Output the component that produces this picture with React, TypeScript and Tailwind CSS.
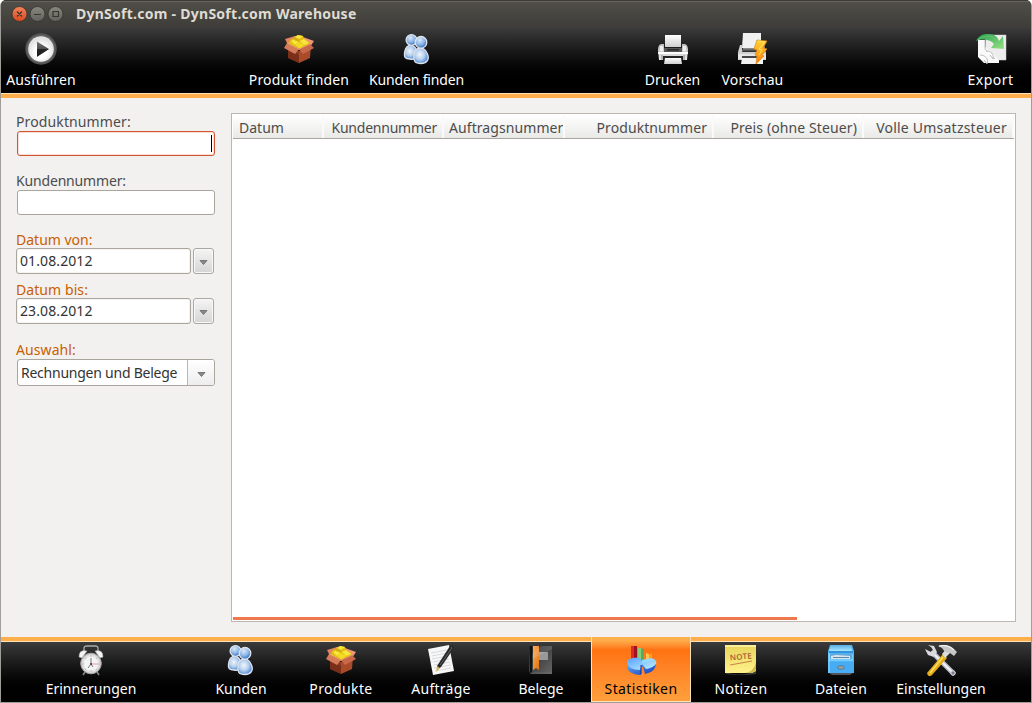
import type { ReactNode } from "react";

function Icon({ children }: { children: ReactNode }) {
  return (
    <svg width="32" height="32" viewBox="0 0 32 32" className="block shrink-0">
      {children}
    </svg>
  );
}

function Gradient({ id, from, to, x2 = 0, y2 = 1 }: { id: string; from: string; to: string; x2?: number; y2?: number }) {
  return (
    <linearGradient id={id} x1="0" y1="0" x2={x2} y2={y2}>
      <stop offset="0" stopColor={from} />
      <stop offset="1" stopColor={to} />
    </linearGradient>
  );
}

const RunIcon = () => (
  <Icon>
    <defs>
      <radialGradient id="run-disc" cy=".6">
        <stop offset=".5" stopColor="#fff" />
        <stop offset="1" stopColor="#e2e2e2" />
      </radialGradient>
      <Gradient id="run-arrow" from="#777" to="#222" />
    </defs>
    <circle cx="16" cy="16" r="15.7" fill="#555" />
    <circle cx="16" cy="16" r="14" fill="#656565" />
    <circle cx="16" cy="16" r="12.8" fill="url(#run-disc)" />
    <path d="M12 8.5 24 16 12 23.8Z" fill="url(#run-arrow)" />
    <path d="M12 16H24L12 23.8Z" fill="#171717" opacity=".7" />
  </Icon>
);

const BoxIcon = () => (
  <Icon>
    <path d="M5 13 16 18V30L5 25Z" fill="#8d3a20" />
    <path d="M16 18 28 12 27 25 16 30Z" fill="#a94a2b" />
    <path d="M5 17 16 22V30L5 25Z" fill="#6d2814" opacity=".6" />
    <path d="M2 6 12 3 14 6 5 12Z" fill="#e08662" />
    <path d="M20 4 31 8 27 14 18 8Z" fill="#ef9675" />
    <path d="M5 11 8 6 12 5 15 2 20 3 21 6 26 9 26 13 16 17 5 14Z" fill="#e3bf10" />
    <path d="M11 4 15 2 20 3 16 6Z M8 8 12 6 16 9 12 12Z M17 8 21 6 26 10 21 12Z" fill="#f8e53e" />
    <path d="M11 4 16 6V9L11 7Z M12 12 16 9 19 12 16 16Z" fill="#d4b011" />
    <path d="M16 9 21 12 17 16 12 12Z" fill="#f4da22" />
    <path d="M4 10 16 16 12 21 1 15Z" fill="#d57b59" />
    <path d="M16 16 27 11 31 15 20 21Z" fill="#c9694b" />
    <path d="M4 10 16 16 27 11" fill="none" stroke="#ed9b77" strokeWidth=".8" />
  </Icon>
);

const PeopleIcon = () => (
  <Icon>
    <defs>
      <radialGradient id="person-body" cx=".42" cy=".42" r=".65">
        <stop offset="0" stopColor="#f1f6fc" />
        <stop offset=".5" stopColor="#b6cfee" />
        <stop offset="1" stopColor="#3a7ace" />
      </radialGradient>
      <radialGradient id="person-head" cx=".4" cy=".3" r=".7">
        <stop offset="0" stopColor="#dae9fa" />
        <stop offset=".6" stopColor="#8ab2e5" />
        <stop offset="1" stopColor="#2b6bc3" />
      </radialGradient>
    </defs>
    <g stroke="#dce4ee" strokeWidth="1.300">
      <path d="M7 13C10 11 15 13 16 19 17 25 14 27 9 26 4 26 3 24 3.500 20 4 16 5 14 7 13Z" fill="url(#person-body)" />
      <circle cx="10.500" cy="7" r="5.400" fill="url(#person-head)" />
      <path d="M16 16C20 13 25 16 26.500 21 29 27 25 30.500 20 30.500 14 30.500 12 28 13 23 13 19 14 17 16 16Z" fill="url(#person-body)" />
      <circle cx="20" cy="9.300" r="5.800" fill="url(#person-head)" />
    </g>
  </Icon>
);

const PrintIcon = () => (
  <Icon>
    <defs>
      <Gradient id="printer-body" from="#bcbcbc" to="#e9e9e9" />
      <Gradient id="printer-paper" from="#fff" to="#cfcfcf" />
    </defs>
    <path d="M8 2H24V14H8Z" fill="url(#printer-paper)" />
    <path d="M4 11Q1 12 1 17L2 27H30L31 17Q31 12 28 11H25V16H7V11Z" fill="url(#printer-body)" />
    <path d="M7 15H25V19H7Z" fill="#555" />
    <path d="M10 16H22V17.500H10Z" fill="#292929" />
    <path d="M1 19H31V21H1Z" fill="#fff" />
    <path d="M6 23H26V27H6Z" fill="#252525" />
    <path d="M8 25H24L25 31H7Z" fill="url(#printer-paper)" />
    <path d="M3 13H6V18H3M26 13H29V18H26" fill="#eee" />
    <path d="M5 22V27M27 22V27" stroke="#888" />
  </Icon>
);

const PreviewIcon = () => (
  <Icon>
    <defs>
      <Gradient id="bolt" from="#ffd632" to="#ff7b05" />
      <Gradient id="preview-slot" from="#999" to="#222" />
    </defs>
    <path d="M6 0H24V15H5Z" fill="#f1f1f1" />
    <path d="M3 12H5V17H25L27 12 29 20V27H1V19Z" fill="#cfcfcf" />
    <path d="M6 15H25V19H5Z" fill="url(#preview-slot)" />
    <path d="M1 21H29V26H1Z" fill="#e5e5e5" />
    <path d="M5 23H25V25H5Z" fill="#444" />
    <path d="M5 25H26V31H4Z" fill="#f2f2f2" />
    <path d="M20 7 30 8 26 15 30 16 25 22 27 23 19 31 20 23 18 22 20 17 17 16Z" fill="url(#bolt)" stroke="#d78616" strokeWidth=".7" />
    <path d="M21 8 28 9 22 16 25 17 22 22" fill="none" stroke="#ffe569" />
  </Icon>
);

const ExportIcon = () => (
  <Icon>
    <defs>
      <Gradient id="export-arrow" from="#249c4b" to="#98e386" x2={1} />
    </defs>
    <path d="M11 2H31V27H17L10 20Z" fill="#ededed" stroke="#ccc" strokeWidth=".5" />
    <path d="M3 7H10V14L19 22 24 27V30H9L3 24Z" fill="#fafafa" />
    <path d="M10 7V16L20 26" fill="none" stroke="#aaa" strokeWidth=".7" />
    <path d="M11 18C16 18 19 21 18 26L15 22M5 22C10 22 14 26 12 31L9 27" fill="#fff" stroke="#aaa" strokeWidth=".8" />
    <path d="M1 8C4 2 9 .5 14 1 19 1 23 4 24 8L28 3 29 16 16 15 19 11C16 7 8 5 1 8Z" fill="url(#export-arrow)" />
    <path d="M3 7C9 2 18 1 23 9" fill="none" stroke="#67c779" strokeWidth=".8" />
  </Icon>
);

const ClockIcon = () => (
  <Icon>
    <defs>
      <radialGradient id="clock-face">
        <stop offset=".6" stopColor="#f5f5f5" />
        <stop offset="1" stopColor="#c7c7c7" />
      </radialGradient>
    </defs>
    <path d="M9 8V4Q9 2 12 2H20Q23 2 23 4V8" fill="none" stroke="#aaa" strokeWidth="1.300" />
    <path d="M4 13Q4 5 12 7L7 14ZM28 13Q28 5 20 7L25 14Z" fill="#f4f4f4" stroke="#aaa" strokeWidth=".5" />
    <path d="M10 28 8 31M22 28 24 31" stroke="#8a8a8a" strokeWidth="1.500" />
    <circle cx="16" cy="19.500" r="10.300" fill="url(#clock-face)" stroke="#aaa" />
    <g stroke="#ababab" strokeWidth=".7"><path d="M16 11V13M16 26V28M7 20H9M23 20H25M10 13.500 11 15M22 13.500 21 15M10 26 11 25M22 26 21 25" /></g>
    <path d="M16 14V20L13 24M16 20 18 23" fill="none" stroke="#555" strokeWidth=".8" />
    <path d="M15 20H23" stroke="#ee8780" strokeWidth=".8" />
    <circle cx="16" cy="20" r="1.100" fill="#444" />
  </Icon>
);

const OrdersIcon = () => (
  <Icon>
    <path d="M3 5 24 1 29 27 8 31Z" fill="#f7f7f7" />
    <g stroke="#c9cdd1" strokeWidth=".7"><path d="M6 9 22 6M7 12 22 9M7 15 23 12M8 18 24 15M9 21 25 18M9 24 26 21M10 27 26 24" /></g>
    <path d="M25 2 28 1 29 4 16 23 12 26 12 22Z" fill="#28292b" />
    <path d="M26 3 27 4 15 21" fill="none" stroke="#777" strokeWidth=".7" />
    <path d="M12 22 15 24 11 28Z" fill="#d7b755" />
  </Icon>
);

const BookIcon = () => (
  <Icon>
    <defs>
      <Gradient id="book-cover" from="#262626" to="#666" x2={1} />
      <Gradient id="book-mark" from="#ffab58" to="#dd7510" x2={1} />
    </defs>
    <path d="M4 2H27V30H6L4 27Z" fill="url(#book-cover)" />
    <path d="M5 2H7V29H5Z" fill="#111" />
    <path d="M14 8H23V16H14Z" fill="#999" />
    <path d="M8 2H14V26L11 24 8 26Z" fill="url(#book-mark)" />
    <path d="M7 15 27 5V2H16L8 9" fill="#fff" opacity=".13" />
    <path d="M5 29H27" stroke="#777" strokeWidth=".6" />
  </Icon>
);

const ChartIcon = () => (
  <Icon>
    <defs>
      <Gradient id="pie-top" from="#569fff" to="#c3f4ff" x2={1} />
      <Gradient id="pie-side" from="#75b9f3" to="#0b31b8" x2={1} />
    </defs>
    <path d="M6 2H12V19H6Z" fill="#9e1322" />
    <path d="M6 2H9V19H6Z" fill="#df2629" />
    <path d="M13 4 19 5V22H13Z" fill="#57a966" />
    <path d="M13 4H16V21H13Z" fill="#87cc77" />
    <path d="M21 9 27 10V22H21Z" fill="#ff9b14" />
    <path d="M21 9 24 11V22H21Z" fill="#ffc45a" />
    <path d="M2 18V24C3 28 9 31 16 31V23H18L20 30C27 28 31 26 31 18Z" fill="url(#pie-side)" />
    <path d="M2 18C2 15 8 13 15 14L17 18 31 17C33 21 26 24 21 25L17 20 15 26C8 26 2 23 2 18Z" fill="url(#pie-top)" />
    <path d="M17 16 26 14Q30 15 31 17L17 19Z" fill="#92d8ff" />
    <path d="M16 21V30" stroke="#102a9e" />
  </Icon>
);

const NoteIcon = () => (
  <Icon>
    <defs>
      <Gradient id="note-paper" from="#e8d45d" to="#fff28b" />
    </defs>
    <path d="M1 28Q16 34 31 26V30Q16 32 1 30Z" fill="#3c3c3c" />
    <path d="M0 1H31V27L27 29H0Z" fill="url(#note-paper)" />
    <path d="M0 1H31V3H0Z" fill="#fbed97" />
    <path d="M31 18Q29 28 20 29H27L31 26Z" fill="#d0b945" />
    <text x="5" y="15.500" transform="rotate(-5 16 16)" textLength="22" fontFamily="Noto Sans, sans-serif" fontSize="8" fontWeight="600" fill="#aa6637">NOTE</text>
    <path d="M5 21 27 17" stroke="#bb663b" strokeWidth=".8" />
  </Icon>
);

const FilesIcon = () => (
  <Icon>
    <defs>
      <Gradient id="cabinet" from="#4eb3ee" to="#54b7fb" />
      <Gradient id="cabinet-top" from="#58ade5" to="#a7e7ff" />
    </defs>
    <path d="M5 1H27L29 7V29H3V7Z" fill="url(#cabinet)" />
    <path d="M6 1H26L27 7H4Z" fill="url(#cabinet-top)" />
    <path d="M4 8H28" stroke="#2381d2" strokeWidth="1.300" />
    <path d="M4 10H28V17H4Z" fill="#72cdfc" />
    <path d="M5 10H27V15H5Z" fill="#62aade" />
    <path d="M6 12 11 11 25 12V15H6Z" fill="#dae4eb" />
    <path d="M8 13.500H24" stroke="#5988af" />
    <path d="M3 18H29V29H3Z" fill="#3ea1f0" opacity=".5" />
    <path d="M4 9V29" stroke="#a9e6ff" strokeWidth=".8" />
    <rect x="13" y="22" width="6" height="3" rx="1" fill="#a6a8a5" stroke="#526b7c" strokeWidth=".8" />
    <path d="M4 29H28L25 31H7Z" fill="#555" />
  </Icon>
);

const ToolsIcon = () => (
  <Icon>
    <path d="M8 9 28 29" stroke="#b8bac7" strokeWidth="5" strokeLinecap="round" />
    <path d="M8 9 27 28" stroke="#f4f4f7" strokeWidth="2" />
    <path d="M3 1 9 2 12 8 9 13 3 11 0 5 6 8 8 6 6 3Z" fill="#d9d9df" />
    <circle cx="28" cy="29" r="2.200" fill="#7b7c88" stroke="#ddd" />
    <path d="M18 10 22 14 7 31Q3 34 2 29Z" fill="#e5ad19" />
    <path d="M18 13 5 29" stroke="#ffe164" strokeWidth="1.300" />
    <path d="M17 10 22 4 26 8 20 14Z" fill="#ddd" />
    <path d="M13 2Q23-1 29 5L32 8 29 12 25 9 20 8 17 4Z" fill="#c7c7c7" />
    <path d="M14 2Q23 0 29 6" fill="none" stroke="#fff" />
  </Icon>
);

type ToolProps = { label: string; icon: ReactNode; tracking?: string; gap?: string; className?: string };

function Tool({ label, icon, tracking = "", gap = "mt-[5px]", className = "" }: ToolProps) {
  return (
    <button className={`flex shrink-0 flex-col items-center ${className}`}>
      {icon}
      <span className={`text-sm leading-5 whitespace-nowrap text-white ${gap} ${tracking}`}>{label}</span>
    </button>
  );
}

const tabs = [
  { label: "Erinnerungen", icon: <ClockIcon />, tracking: "", width: "w-[150px] pr-[50px]" },
  { label: "Kunden", icon: <PeopleIcon />, tracking: "", width: "w-[100px]" },
  { label: "Produkte", icon: <BoxIcon />, tracking: "tracking-[0.4px]", width: "w-[100px]" },
  { label: "Aufträge", icon: <OrdersIcon />, tracking: "tracking-[0.25px]", width: "w-[100px]" },
  { label: "Belege", icon: <BookIcon />, tracking: "", width: "w-[100px]" },
  { label: "Statistiken", icon: <ChartIcon />, tracking: "tracking-[0.38px]", width: "w-[100px]", active: true },
  { label: "Notizen", icon: <NoteIcon />, tracking: "tracking-[0.3px]", width: "w-[100px]" },
  { label: "Dateien", icon: <FilesIcon />, tracking: "tracking-[0.15px]", width: "w-[100px]" },
  { label: "Einstellungen", icon: <ToolsIcon />, tracking: "", width: "w-[100px]" },
];

function Arrow() {
  return (
    <svg width="9" height="5" viewBox="0 0 9 5">
      <path d="M1 .500H8L4.500 4.500Z" fill="#888" stroke="#707070" strokeWidth=".9" />
    </svg>
  );
}

function DateField({ value }: { value: string }) {
  return (
    <div className="flex h-[26px] gap-[2px]">
      <div className="flex w-[175px] items-center rounded-[3px] border border-[#aaa59d] bg-white pl-[3px] text-sm tracking-[0.1px] text-[#333] shadow-[inset_0_0_0_1px_#f5f4f3]">{value}</div>
      <button className="flex w-[21px] items-center justify-center rounded-[3px] border border-[#aaa8a4] bg-linear-to-b from-[#f5f5f5] to-[#d5d5d5] pt-[3px] shadow-[inset_0_0_0_1px_#f8f8f8]">
        <Arrow />
      </button>
    </div>
  );
}

const columns = [
  { label: "Datum", width: "w-[91px]", align: "justify-start pl-[6px]", tracking: "" },
  { label: "Kundennummer", width: "w-[120px]", align: "justify-end pr-[5px]", tracking: "tracking-[-0.23px]" },
  { label: "Auftragsnummer", width: "w-[121px]", align: "justify-start pl-[5px]", tracking: "tracking-[0.08px]" },
  { label: "Produktnummer", width: "w-[149px]", align: "justify-end pr-[5px]", tracking: "tracking-[0.08px]" },
  { label: "Preis (ohne Steuer)", width: "w-[150px]", align: "justify-end pr-[5px]", tracking: "tracking-[0.11px]" },
  { label: "Volle Umsatzsteuer", width: "w-[150px]", align: "justify-end pr-[5px]", tracking: "tracking-[0.22px]" },
];

export default function App() {
  return (
    <div className="h-[703px] w-[1032px] overflow-hidden bg-white font-['Noto_Sans','Open_Sans',sans-serif]">
      <div className="flex h-full flex-col overflow-hidden rounded-t-[6px] border border-t-0 border-[#a09d98] bg-[#f2f1f0]">
        <header className="flex h-[93px] shrink-0 flex-col bg-black">
          <div className="flex h-7 shrink-0 items-center border-t border-[#3c3b37] bg-linear-to-b from-[#514f49] to-[#3d3c38] pb-px pl-[10px] shadow-[inset_0_1px_0_#66645c]">
            <svg width="54" height="18" viewBox="0 0 54 18">
              <defs>
                <Gradient id="close-button" from="#f5845b" to="#d8481e" />
                <Gradient id="window-button" from="#88877f" to="#62615b" />
              </defs>
              <circle cx="8.500" cy="9" r="7.500" fill="url(#close-button)" stroke="#34322e" strokeWidth=".8" />
              <circle cx="26.500" cy="9" r="7.500" fill="url(#window-button)" stroke="#34322e" strokeWidth=".8" />
              <circle cx="44.500" cy="9" r="7.500" fill="url(#window-button)" stroke="#34322e" strokeWidth=".8" />
              <path d="M6 6.500 11 11.500M11 6.500 6 11.500M23 9.500H30M42 6.500H47.500V11.500H42Z" fill="none" stroke="#363530" strokeWidth="1.200" />
            </svg>
            <h1 className="ml-[11px] text-sm font-bold tracking-[0.26px] whitespace-nowrap text-[#dfdbd2]">DynSoft.com - DynSoft.com Warehouse</h1>
          </div>
          <div className="flex h-[65px] shrink-0 bg-linear-to-b from-[#3b3b3b] to-black to-90% pt-[5px]">
            <Tool label="Ausführen" icon={<RunIcon />} tracking="tracking-[0.1px]" className="w-[80px]" />
            <Tool label="Produkt finden" icon={<BoxIcon />} tracking="tracking-[0.16px]" className="ml-[158px] w-[120px]" />
            <Tool label="Kunden finden" icon={<PeopleIcon />} tracking="tracking-[-0.15px]" className="w-[115px]" />
            <Tool label="Drucken" icon={<PrintIcon />} className="ml-[158px] w-[81px]" />
            <Tool label="Vorschau" icon={<PreviewIcon />} tracking="tracking-[0.1px]" className="w-[79px]" />
            <Tool label="Export" icon={<ExportIcon />} tracking="tracking-[0.45px]" className="ml-auto w-[81px]" />
          </div>
        </header>
        <div className="h-[5px] shrink-0 border-t border-[#ffe2b8] bg-[#ffae4c]" />

        <main className="flex h-[539px] shrink-0 pt-[15px]">
          <form className="flex w-[230px] flex-col pl-[15px] text-sm leading-[18px] text-[#4c4c4c]">
            <label className="h-[18px] tracking-[0.12px]">Produktnummer:</label>
            <div className="ml-px flex h-[25px] w-[198px] items-center justify-end rounded-[3px] border border-[#d25530] bg-white pr-[2px] shadow-[inset_0_0_0_1px_#fbded4]">
              <div className="h-[17px] w-px bg-black" />
            </div>
            <label className="mt-4 h-[18px] tracking-[-0.17px]">Kundennummer:</label>
            <div className="ml-px h-[25px] w-[198px] rounded-[3px] border border-[#aaa59d] bg-white" />
            <label className="mt-4 h-[17px] text-[#c86000]">Datum von:</label>
            <DateField value="01.08.2012" />
            <label className="mt-[7px] h-[17px] tracking-[0.08px] text-[#c86000]">Datum bis:</label>
            <DateField value="23.08.2012" />
            <label className="mt-[17px] h-[18px] tracking-[0.08px] text-[#c86000]">Auswahl:</label>
            <div className="ml-px flex h-[27px] w-[198px] overflow-hidden rounded-[3px] border border-[#aaa59d] bg-white text-[#333]">
              <div className="flex w-[170px] items-center border-r border-[#bbb7b0] pl-[3px] tracking-[-0.24px] whitespace-nowrap">Rechnungen und Belege</div>
              <div className="flex flex-1 items-center justify-center bg-linear-to-b from-white to-[#ededed] pt-[3px]"><Arrow /></div>
            </div>
          </form>

          <section className="flex h-[509px] w-[785px] flex-col border border-[#bbb8b2] bg-white p-px">
            <div className="flex h-[24px] shrink-0 border-b border-[#aaa59d] bg-linear-to-b from-white to-[#e9e9e7] text-sm leading-[25px] text-[#4c4c4c]">
              {columns.map((column) => (
                <div key={column.label} className={`flex shrink-0 overflow-hidden border-r-2 border-[#fafafa] whitespace-nowrap ${column.width} ${column.align} ${column.tracking}`}>
                  {column.label}
                </div>
              ))}
            </div>
            <div className="mt-auto h-[3px] w-[564px] bg-[#ef794c]" />
          </section>
        </main>

        <nav className="flex h-[65px] shrink-0">
          <div className="h-full w-[40px] border-t-4 border-[#ffae4c]"><div className="h-[61px] border-t border-[#ffe2b8] bg-linear-to-b from-[#3b3b3b] to-black to-95%" /></div>
          {tabs.map((tab) =>
            tab.active ? (
              <div key={tab.label} className={`flex h-full justify-center border-x border-b border-[#ffe2b8] bg-linear-to-b from-[#ffae4c] from-5% via-[#ff7211] via-20% to-[#ff9f3c] pt-[7px] [&_span]:text-black ${tab.width}`}>
                <Tool label={tab.label} icon={tab.icon} tracking={tab.tracking} gap="mt-[3px]" />
              </div>
            ) : (
              <div key={tab.label} className={`h-full border-t-4 border-[#ffae4c] bg-[#ffae4c] ${tab.width.startsWith("w-[150px]") ? "w-[150px]" : "w-[100px]"}`}>
                <div className={`flex h-[61px] justify-center border-t border-[#ffe2b8] bg-linear-to-b from-[#3b3b3b] to-black to-95% pt-[2px] ${tab.width}`}>
                  <Tool label={tab.label} icon={tab.icon} tracking={tab.tracking} gap="mt-[3px]" />
                </div>
              </div>
            ),
          )}
          <div className="h-full flex-1 border-t-4 border-[#ffae4c]"><div className="h-[61px] border-t border-[#ffe2b8] bg-linear-to-b from-[#3b3b3b] to-black to-95%" /></div>
        </nav>
      </div>
    </div>
  );
}
